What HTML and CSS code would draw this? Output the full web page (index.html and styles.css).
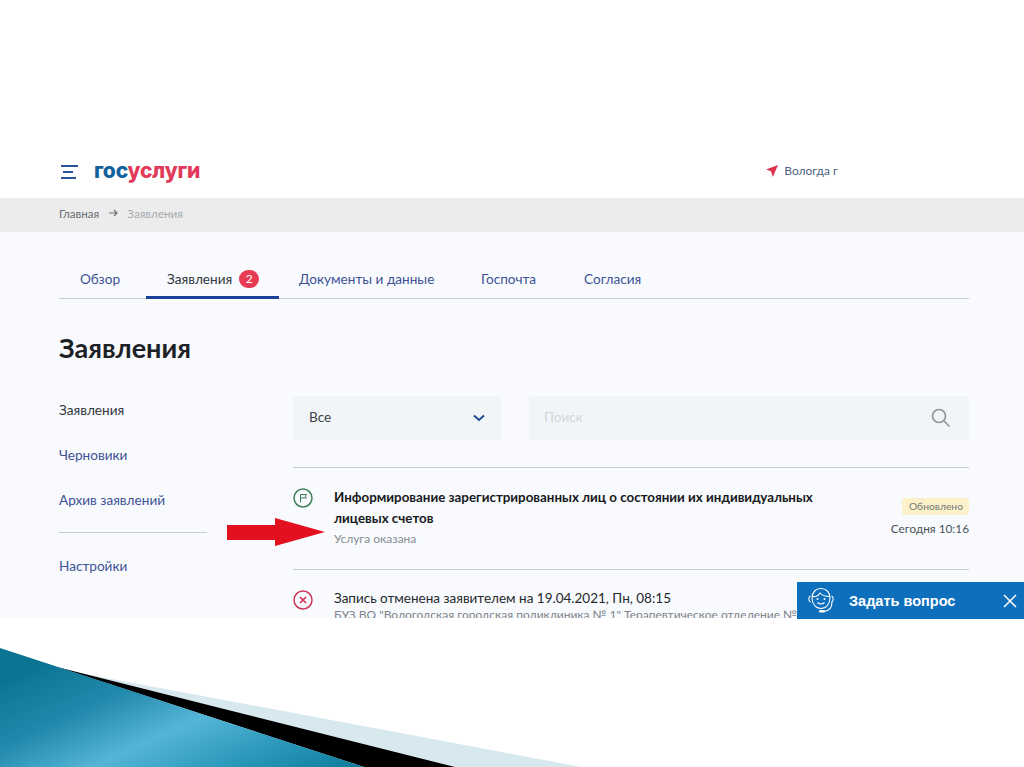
FILE: index.html
```html
<!DOCTYPE html>
<html lang="ru">
<head>
<meta charset="utf-8">
<title>Госуслуги</title>
<link rel="stylesheet" href="styles.css">
</head>
<body>
<div class="slide">
  <div class="shot">
    <header class="header">
      <div class="brand">
        <svg class="burger" width="17" height="14" viewBox="0 0 17 14"><path d="M0 1h17M2 7h10M0 13h15" stroke="#2a5499" stroke-width="2" fill="none"/></svg>
        <span class="logo"><span class="logo-blue">гос</span><span class="logo-red">услуги</span></span>
      </div>
      <div class="city">
        <svg width="12" height="12" viewBox="0 0 12 12"><path d="M12 0 0 4.600l5 1.600L6.800 12z" fill="#e0324f"/></svg>
        <span>Вологда г</span>
      </div>
    </header>
    <nav class="crumbs"><span class="crumb-link">Главная</span>
      <svg class="crumb-arrow" width="9" height="8" viewBox="0 0 9 8"><path d="M0 4h8M5 1l3 3-3 3" stroke="#6b6f73" stroke-width="1.200" fill="none"/></svg>
      <span class="crumb-current">Заявления</span></nav>
    <main class="content">
      <div class="tabs">
        <span class="tab tab-first">Обзор</span>
        <span class="tab tab-active">Заявления <span class="badge">2</span></span>
        <span class="tab tab-docs">Документы и данные</span>
        <span class="tab tab-mail">Госпочта</span>
        <span class="tab tab-agree">Согласия</span>
      </div>
      <h1 class="title">Заявления</h1>
      <div class="columns">
        <aside class="side">
          <div class="side-item side-current">Заявления</div>
          <div class="side-item">Черновики</div>
          <div class="side-item">Архив заявлений</div>
          <div class="side-rule"></div>
          <div class="side-item">Настройки</div>
        </aside>
        <section class="list">
          <div class="filters">
            <div class="select"><span class="field-text">Все</span>
              <svg width="12" height="8" viewBox="0 0 12 8"><path d="M1 1.500 6 6l5-4.500" stroke="#1d4a94" stroke-width="2" fill="none"/></svg>
            </div>
            <div class="search"><span class="field-text">Поиск</span>
              <svg width="20" height="20" viewBox="0 0 20 20"><circle cx="8" cy="8" r="6.500" stroke="#8b949c" stroke-width="1.600" fill="none"/><path d="m13 13 5.500 5.500" stroke="#8b949c" stroke-width="1.600"/></svg>
            </div>
          </div>
          <article class="item">
            <svg class="status" width="20" height="20" viewBox="0 0 20 20"><circle cx="10" cy="10" r="9" stroke="#3f7f5a" stroke-width="1.500" fill="none"/><path d="M7.500 14.500V6.500h6l-1.200 1.700 1.200 1.700h-6" stroke="#3f7f5a" stroke-width="1" fill="none"/></svg>
            <div class="item-body">
              <div class="item-title">Информирование зарегистрированных лиц о состоянии их индивидуальных лицевых счетов</div>
              <div class="item-sub">Услуга оказана</div>
            </div>
            <div class="item-meta"><span class="tag">Обновлено</span><span class="time">Сегодня 10:16</span></div>
          </article>
          <article class="item item-next">
            <svg class="status" width="20" height="20" viewBox="0 0 20 20"><circle cx="10" cy="10" r="9" stroke="#c8375a" stroke-width="1.500" fill="none"/><path d="m7 7 6 6m0-6-6 6" stroke="#d92c4c" stroke-width="1.600"/></svg>
            <div class="item-body">
              <div class="item-plain">Запись отменена заявителем на 19.04.2021, Пн, 08:15</div>
              <div class="item-org">БУЗ ВО "Вологодская городская поликлиника № 1" Терапевтическое отделение № 1</div>
            </div>
          </article>
        </section>
      </div>
    </main>
  </div>
  <svg class="arrow" width="98" height="28" viewBox="0 0 98 28"><path d="M0 7h48V0l50 14-50 14v-6H0z" fill="#e3101f"/></svg>
  <div class="chat">
    <svg width="28" height="30" viewBox="0 0 28 30"><g fill="none" stroke="#fff" stroke-width="1.100"><path d="M5 12C5 6 9 2.500 14 2.500S23 6 23 12c0 6-4 10.500-9 10.500S5 18 5 12z"/><path d="M5.500 10.500c3.500.5 6-1 7.500-3.500 2 2.500 5 3.500 9.500 3.500"/><path d="M3.500 10c-2 .5-2.500 5 0 6M24.500 10c2 .5 2.500 5 0 6M25 16c0 6-3 9-8 9.500"/><path d="M10.500 16.500c2 1.700 5 1.700 7 0"/></g><rect x="12" y="24" width="6" height="2.600" rx="1.300" fill="#fff"/><circle cx="10.500" cy="13" r="1" fill="#fff"/><circle cx="17.500" cy="13" r="1" fill="#fff"/></svg>
    <span class="chat-text">Задать вопрос</span>
    <svg class="chat-close" width="14" height="14" viewBox="0 0 14 14"><path d="m1 1 12 12M13 1 1 13" stroke="#fff" stroke-width="1.500"/></svg>
  </div>
  <svg class="deco" width="1024" height="127" viewBox="0 0 1024 127">
    <defs>
      <linearGradient id="blue" x1="0" y1="0.3" x2="1" y2="1">
        <stop offset="0" stop-color="#0c7493"/>
        <stop offset="0.25" stop-color="#2088ac"/>
        <stop offset="0.5" stop-color="#55b5d6"/>
        <stop offset="0.72" stop-color="#2f9bbe"/>
        <stop offset="1" stop-color="#0b7c9c"/>
      </linearGradient>
    </defs>
    <path d="M85 34 582 127H455z" fill="#d8e8ef"/>
    <path d="M57 27 455 127H364z" fill="#000"/>
    <path d="M0 8 364 127H0z" fill="url(#blue)"/>
  </svg>
</div>
</body>
</html>
```
FILE: styles.css
```css
* { box-sizing: border-box; }
html, body { margin: 0; padding: 0; }
body { background: #fff; font-family: Lato, "Noto Sans", sans-serif; color: #1f2a36; }
.slide { position: relative; width: 1024px; height: 767px; overflow: hidden; background: #fff; }
.shot { height: 618px; overflow: hidden; }

.header { height: 198px; padding: 159px 186px 0 61px; display: flex; justify-content: space-between; align-items: flex-start; background: #fff; }
.brand { display: flex; align-items: center; gap: 16px; }
.burger { margin-top: 2px; }
.logo { font-family: Inter, Lato, sans-serif; font-size: 21px; font-weight: 800; line-height: 24px; letter-spacing: -0.2px; }
.logo-blue { color: #14629d; }
.logo-red { color: #e2395a; }
.city { display: flex; align-items: center; gap: 6px; font-size: 12px; line-height: 22px; color: #4b5f86; margin-top: 1px; }

.crumbs { height: 34px; background: #ececec; padding: 0 0 4px 59px; display: flex; align-items: center; font-size: 11.600px; color: #6b6f73; }
.crumb-arrow { margin: 0 9px 0 10px; }
.crumb-current { color: #a8abae; }

.content { height: 386px; background: #f8fafd; padding: 0 55px 0 59px; }
.tabs { height: 67px; display: flex; align-items: flex-end; border-bottom: 1px solid #c9ced4; font-size: 13.600px; color: #3d5296; }
.tab { height: 32px; line-height: 26px; white-space: nowrap; }
.tab-first { margin-left: 21px; width: 66px; }
.tab-active { width: 133px; padding-left: 21px; color: #30363c; border-bottom: 3px solid #1a3f99; height: 33px; margin-bottom: -1px; display: flex; gap: 7px; align-items: flex-start; }
.badge { width: 20px; height: 18px; margin-top: 4px; border-radius: 9px; background: #e63a55; color: #fff; font-size: 12px; line-height: 18px; text-align: center; }
.tab-docs { margin-left: 20px; width: 182px; }
.tab-mail { width: 103px; }
.title { margin: 32px 0 0; font-size: 27px; line-height: 34px; font-weight: 700; color: #1c2126; }
.columns { display: flex; margin-top: 31px; }
.side { width: 234px; flex: none; font-size: 13.600px; padding-top: 1px; }
.side-item { height: 45px; line-height: 26px; color: #3d5296; }
.side-current { color: #30363c; }
.side-rule { width: 148px; height: 1px; background: #c9ced4; margin: 0 0 20px; }

.list { width: 676px; }
.filters { display: flex; gap: 28px; height: 72px; border-bottom: 1px solid #c9ced4; }
.select, .search { height: 44px; background: #f2f5f8; border-radius: 3px; display: flex; align-items: center; justify-content: space-between; font-size: 13.600px; }
.field-text { margin-bottom: 3px; }
.select { width: 208px; padding: 0 16px; color: #3c4349; }
.search { width: 440px; padding: 0 18px 0 15px; color: #d3d7db; }

.item { display: flex; padding-top: 19px; height: 102px; border-bottom: 1px solid #c9ced4; }
.status { flex: none; margin: 1px 21px 0 0; }
.item-body { flex: 1; min-width: 0; }
.item-title { width: 500px; font-size: 13.350px; font-weight: 700; line-height: 21px; color: #17191c; }
.item-sub { font-size: 12px; line-height: 20px; color: #878d92; }
.item-meta { display: flex; flex-direction: column; align-items: flex-end; padding-top: 11px; gap: 4px; }
.tag { height: 17px; padding: 0 6px 0 7px; background: #fcf1c9; border-radius: 3px; font-size: 10.300px; line-height: 17px; color: #76797a; }
.time { font-size: 11.800px; line-height: 20px; color: #4c5359; }
.item-next { border: 0; }
.item-plain { font-size: 13.500px; line-height: 18px; color: #25292e; }
.item-org { font-size: 12px; line-height: 16px; color: #7f858a; white-space: nowrap; }

.arrow { position: absolute; left: 227px; top: 518px; }
.chat { position: absolute; left: 797px; top: 582px; width: 227px; height: 37px; background: #0e6fbd; display: flex; align-items: center; padding: 0 7px 0 10px; color: #fff; }
.chat-text { font-family: "Liberation Sans", Arial, sans-serif; font-size: 14.500px; font-weight: 700; margin-left: 14px; flex: 1; }
.deco { position: absolute; left: 0; top: 640px; }
```
